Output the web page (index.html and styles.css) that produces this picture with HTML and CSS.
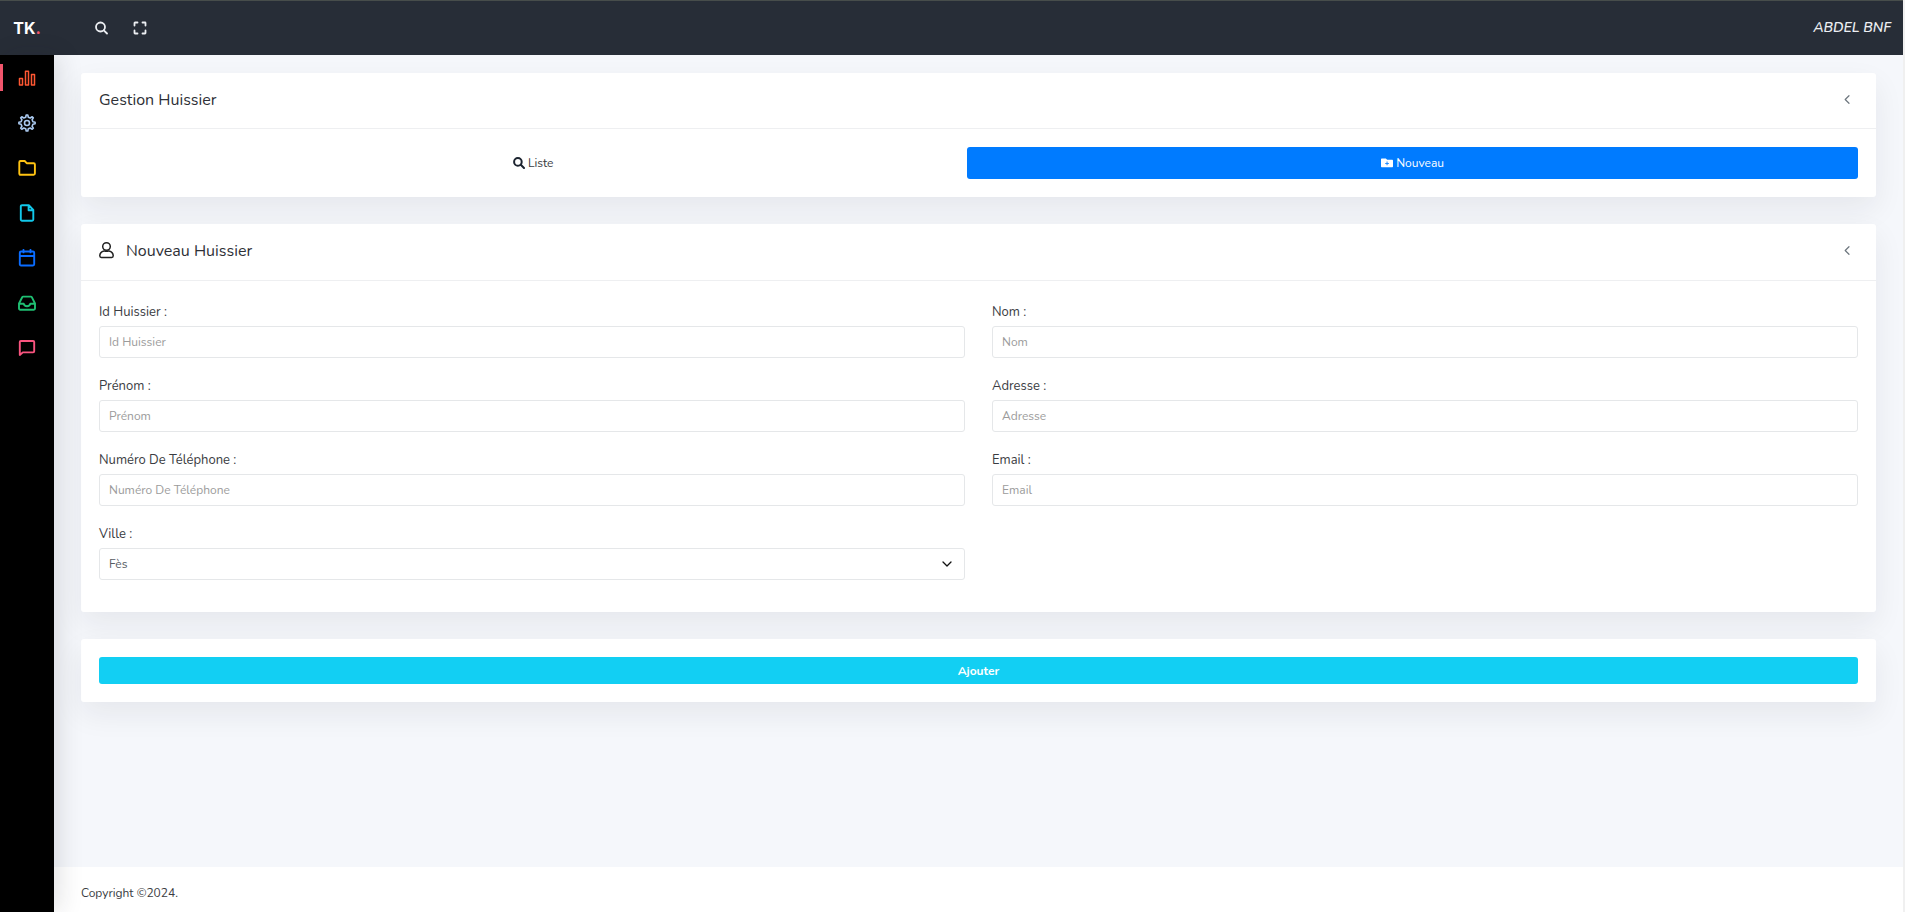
FILE: index.html
```html
<!DOCTYPE html>
<html lang="fr">
<head>
<meta charset="utf-8">
<title>Gestion Huissier</title>
<link rel="stylesheet" href="styles.css">
</head>
<body>
<header class="topbar">
  <a class="brand" href="#">TK<span class="brand-dot">.</span></a>
  <div class="topbar-tools">
    <button class="tool" type="button" aria-label="Rechercher">
      <svg class="tool-icon" viewBox="0 0 14 14"><circle cx="6.500" cy="6" r="4.500"/><path d="M9.800 9.300 13 12.500"/></svg>
    </button>
    <button class="tool" type="button" aria-label="Plein écran">
      <svg class="tool-icon" viewBox="0 0 14 14"><path d="M4.500 1.500H2a.5.5 0 0 0-.5.5v2.500M9.500 1.500H12a.5.5 0 0 1 .5.5v2.500M1.500 9.500V12a.5.5 0 0 0 .5.5h2.500M12.500 9.500V12a.5.5 0 0 1-.5.5H9.500"/></svg>
    </button>
  </div>
  <a class="user" href="#">ABDEL BNF</a>
</header>
<div class="shell">
  <nav class="sidebar" aria-label="Menu principal">
    <a class="side-link chart active" href="#" aria-label="Tableau de bord"><svg class="side-icon" viewBox="0 0 18 18"><path d="M1.500 9.500h3V16h-3zM7.500 2.300h3V16h-3zM13.500 5.500h3V16h-3z"/></svg></a>
    <a class="side-link gear" href="#" aria-label="Paramètres"><svg class="side-icon" viewBox="0 0 18 18"><circle cx="9" cy="9" r="2.500"/><path d="M7.700 3.200 8.200 1h1.600l.5 2.200 1.900.8 2-1.200 1.100 1.100-1.200 1.900.8 1.900 2.200.5v1.600l-2.200.5-.8 1.900 1.200 1.900-1.100 1.100-2-1.200-1.900.8-.5 2.200H8.200l-.5-2.200-1.900-.8-2 1.200-1.100-1.100 1.200-1.900-.8-1.900L.9 9.800V8.200l2.200-.5.8-1.900-1.200-1.900 1.100-1.100 2 1.200z"/></svg></a>
    <a class="side-link folder" href="#" aria-label="Dossiers"><svg class="side-icon" viewBox="0 0 18 18"><path d="M2.500 2h4.200l2 2.200h7c.7 0 1.200.5 1.200 1.200v9.200c0 .7-.5 1.200-1.200 1.200H2.500c-.7 0-1.200-.5-1.200-1.200V3.200C1.300 2.500 1.800 2 2.500 2z"/></svg></a>
    <a class="side-link file" href="#" aria-label="Documents"><svg class="side-icon" viewBox="0 0 18 18"><path d="M4 1.200h6.800L15.300 6v9.500c0 .7-.5 1.200-1.200 1.200H4c-.7 0-1.200-.5-1.200-1.200V2.400c0-.7.500-1.200 1.200-1.200zM10.600 1.400v4.800h4.600"/></svg></a>
    <a class="side-link calendar" href="#" aria-label="Agenda"><svg class="side-icon" viewBox="0 0 18 18"><path d="M3 2.500h12c.7 0 1.200.5 1.200 1.200v11.600c0 .7-.5 1.200-1.200 1.200H3c-.7 0-1.200-.5-1.200-1.200V3.700c0-.7.500-1.200 1.200-1.200zM1.800 7h14.400M5.500.9v2.500M12.500.9v2.500"/></svg></a>
    <a class="side-link inbox" href="#" aria-label="Boîte de réception"><svg class="side-icon" viewBox="0 0 18 18"><path d="M1 9.500 4.200 3.200c.2-.4.500-.6 1-.6h7.600c.5 0 .8.200 1 .6L17 9.500v5c0 .7-.5 1.200-1.200 1.200H2.200c-.7 0-1.200-.5-1.200-1.200zM1.200 9.700h4.500c.3 1.700 1.500 2.600 3.300 2.600s3-.9 3.300-2.600h4.500"/></svg></a>
    <a class="side-link chat" href="#" aria-label="Messages"><svg class="side-icon" viewBox="0 0 18 18"><path d="M2.900 2h12.200c.6 0 1.100.5 1.100 1.100v9.200c0 .6-.5 1.100-1.100 1.100H4.800L1.800 16V3.100C1.800 2.500 2.300 2 2.900 2z"/></svg></a>
  </nav>
  <div class="page">
    <main class="content">
      <section class="card">
        <header class="card-header">
          <h1 class="card-title">Gestion Huissier</h1>
          <button class="collapse" type="button" aria-label="Réduire"><svg class="collapse-icon" viewBox="0 0 6 10"><path d="M5.200.8 1 5l4.200 4.200"/></svg></button>
        </header>
        <div class="tabs">
          <a class="tab" href="#"><svg class="tab-icon" viewBox="0 0 12 12"><circle cx="4.900" cy="4.900" r="3.800"/><path d="M7.800 7.800 11 11"/></svg>Liste</a>
          <a class="tab current" href="#"><svg class="tab-icon solid" viewBox="0 0 12 12"><path fill-rule="evenodd" d="M1 1.500h3.800L6.200 2.700H11c.6 0 1 .4 1 1v5.600c0 .6-.4 1-1 1H1c-.6 0-1-.4-1-1V2.500c0-.6.400-1 1-1zM5.600 4.400v1.500H4.100v.9h1.500v1.500h.9V6.800H8v-.9H6.500V4.400z"/></svg>Nouveau</a>
        </div>
      </section>
      <form class="form">
        <section class="card">
          <header class="card-header">
            <svg class="title-icon" viewBox="0 0 15 25"><circle cx="7.500" cy="7.500" r="3.800"/><path d="M5 11.900C2.400 12.500.8 14.300.8 16.800c0 1 .5 1.700 1.500 1.700h10.400c1 0 1.500-.7 1.500-1.700 0-2.500-1.600-4.300-4.200-4.900-1.600.6-3.400.6-5 0z"/></svg>
            <h2 class="card-title">Nouveau Huissier</h2>
            <button class="collapse" type="button" aria-label="Réduire"><svg class="collapse-icon" viewBox="0 0 6 10"><path d="M5.200.8 1 5l4.200 4.200"/></svg></button>
          </header>
          <div class="fields">
            <div class="field"><label for="id">Id Huissier :</label><input class="control" id="id" type="text" placeholder="Id Huissier"></div>
            <div class="field"><label for="nom">Nom :</label><input class="control" id="nom" type="text" placeholder="Nom"></div>
            <div class="field"><label for="prenom">Prénom :</label><input class="control" id="prenom" type="text" placeholder="Prénom"></div>
            <div class="field"><label for="adresse">Adresse :</label><input class="control" id="adresse" type="text" placeholder="Adresse"></div>
            <div class="field"><label for="tel">Numéro De Téléphone :</label><input class="control" id="tel" type="tel" placeholder="Numéro De Téléphone"></div>
            <div class="field"><label for="email">Email :</label><input class="control" id="email" type="email" placeholder="Email"></div>
            <div class="field"><label for="ville">Ville :</label>
              <div class="select-wrap"><select class="control" id="ville"><option>Fès</option></select><svg class="select-arrow" viewBox="0 0 10 6"><path d="M1 1l4 4 4-4"/></svg></div>
            </div>
          </div>
        </section>
        <section class="card submit-card">
          <button class="submit" type="submit">Ajouter</button>
        </section>
      </form>
    </main>
    <footer class="footer">Copyright ©2024.</footer>
  </div>
</div>
</body>
</html>
```

FILE: styles.css
```css
* { box-sizing: border-box; }
body {
  margin: 0;
  min-height: 100vh;
  display: flex;
  flex-direction: column;
  background: #f5f7fb;
  border-right: 2px solid #f0f0f0;
  color: #3a3c42;
  font: 12px/20px Nunito, Lato, sans-serif;
}
a { color: inherit; text-decoration: none; }
button { font: inherit; border: 0; padding: 0; background: none; color: inherit; cursor: pointer; }
svg { display: block; fill: none; stroke: currentColor; stroke-linecap: round; stroke-linejoin: round; }

.topbar {
  display: flex;
  align-items: center;
  height: 55px;
  border-top: 1px solid #474d4b;
  background: #272d37;
  color: #fff;
}
.brand {
  width: 54px;
  text-align: center;
  font: 700 16px/54px Inter, sans-serif;
}
.brand-dot { color: #f1556c; }
.topbar-tools { display: flex; gap: 25px; padding-left: 40px; color: #eceef2; }
.tool { padding: 1px 0; }
.tool-icon { width: 14px; height: 14px; stroke-width: 1.8; }
.user { margin-left: auto; padding-right: 12px; font-size: 14px; font-weight: 600; font-style: italic; color: #eceef2; }

.shell { flex: 1; display: flex; }
.sidebar {
  position: relative;
  z-index: 2;
  width: 54px;
  flex: none;
  background: #000;
  box-shadow: 6px 0 24px rgba(30, 32, 40, .12);
}
.side-link { display: flex; align-items: center; justify-content: center; height: 45px; padding-top: 1px; }
.side-link.active { background: linear-gradient(#f1556c, #f1556c) left center / 3px 27px no-repeat; }
.side-icon { width: 18px; height: 18px; stroke-width: 1.9; }
.chart { color: #ff5733; }
.chart .side-icon { stroke-width: 1.5; }
.gear { color: #a9c8ee; }
.gear .side-icon { stroke-width: 1.6; }
.folder { color: #ffc312; }
.file { color: #12c8ea; }
.calendar { color: #0a6cff; }
.inbox { color: #1fbf72; }
.chat { color: #f9547f; }

.page { flex: 1; min-width: 0; display: flex; flex-direction: column; }
.content { flex: 1; padding: 18px 27px; display: flex; flex-direction: column; gap: 27px; }
.form { display: flex; flex-direction: column; gap: 27px; }
.card {
  border-radius: 3px;
  background: #fff;
  box-shadow: 0 12px 30px rgba(30, 35, 45, .07);
}
.card-header {
  display: flex;
  align-items: flex-start;
  padding: 15px 18px 16px;
  border-bottom: 1px solid #eeeff1;
}
.card-title { margin: 0; font-size: 16px; line-height: 24px; font-weight: 400; color: #2e3036; }
.title-icon { width: 15px; height: 25px; margin-right: 12px; stroke-width: 1.5; color: #222; }
.collapse { margin-left: auto; padding: 7px 8px; color: #6c757d; }
.collapse-icon { width: 6px; height: 9px; stroke-width: 1.3; }

.tabs { display: flex; padding: 18px; }
.tab {
  flex: 1 1 auto;
  display: flex;
  align-items: center;
  justify-content: center;
  gap: 3px;
  height: 32px;
  border-radius: 3px;
}
.tab-icon { width: 12px; height: 12px; stroke-width: 2; color: #1c2430; }
.tab-icon.solid { fill: currentColor; stroke: none; color: #fff; }
.tab.current { background: #007bff; color: #fff; }

.fields { display: grid; grid-template-columns: 1fr 1fr; gap: 15px 27px; padding: 18px 18px 32px; }
.field { display: flex; flex-direction: column; }
.field label { font-size: 13px; padding: 3px 0 4px; }
.control {
  width: 100%;
  height: 32px;
  padding: 0 9px 1px;
  border: 1px solid #e5e7e9;
  border-radius: 3px;
  background: #fff;
  color: #565b63;
  font: inherit;
  appearance: none;
}
.control::placeholder { color: #9b9b9b; opacity: 1; }
.select-wrap { position: relative; }
.select-arrow {
  position: absolute;
  right: 13px;
  top: 13px;
  width: 10px;
  height: 6px;
  stroke-width: 1.3;
  color: #111;
  pointer-events: none;
}

.submit-card { padding: 18px; }
.submit {
  display: block;
  width: 100%;
  height: 27px;
  border-radius: 3px;
  background: #12cff3;
  color: #fff;
  font-weight: 700;
}
.footer { height: 45px; padding: 0 27px; background: #fff; line-height: 52px; }
```
